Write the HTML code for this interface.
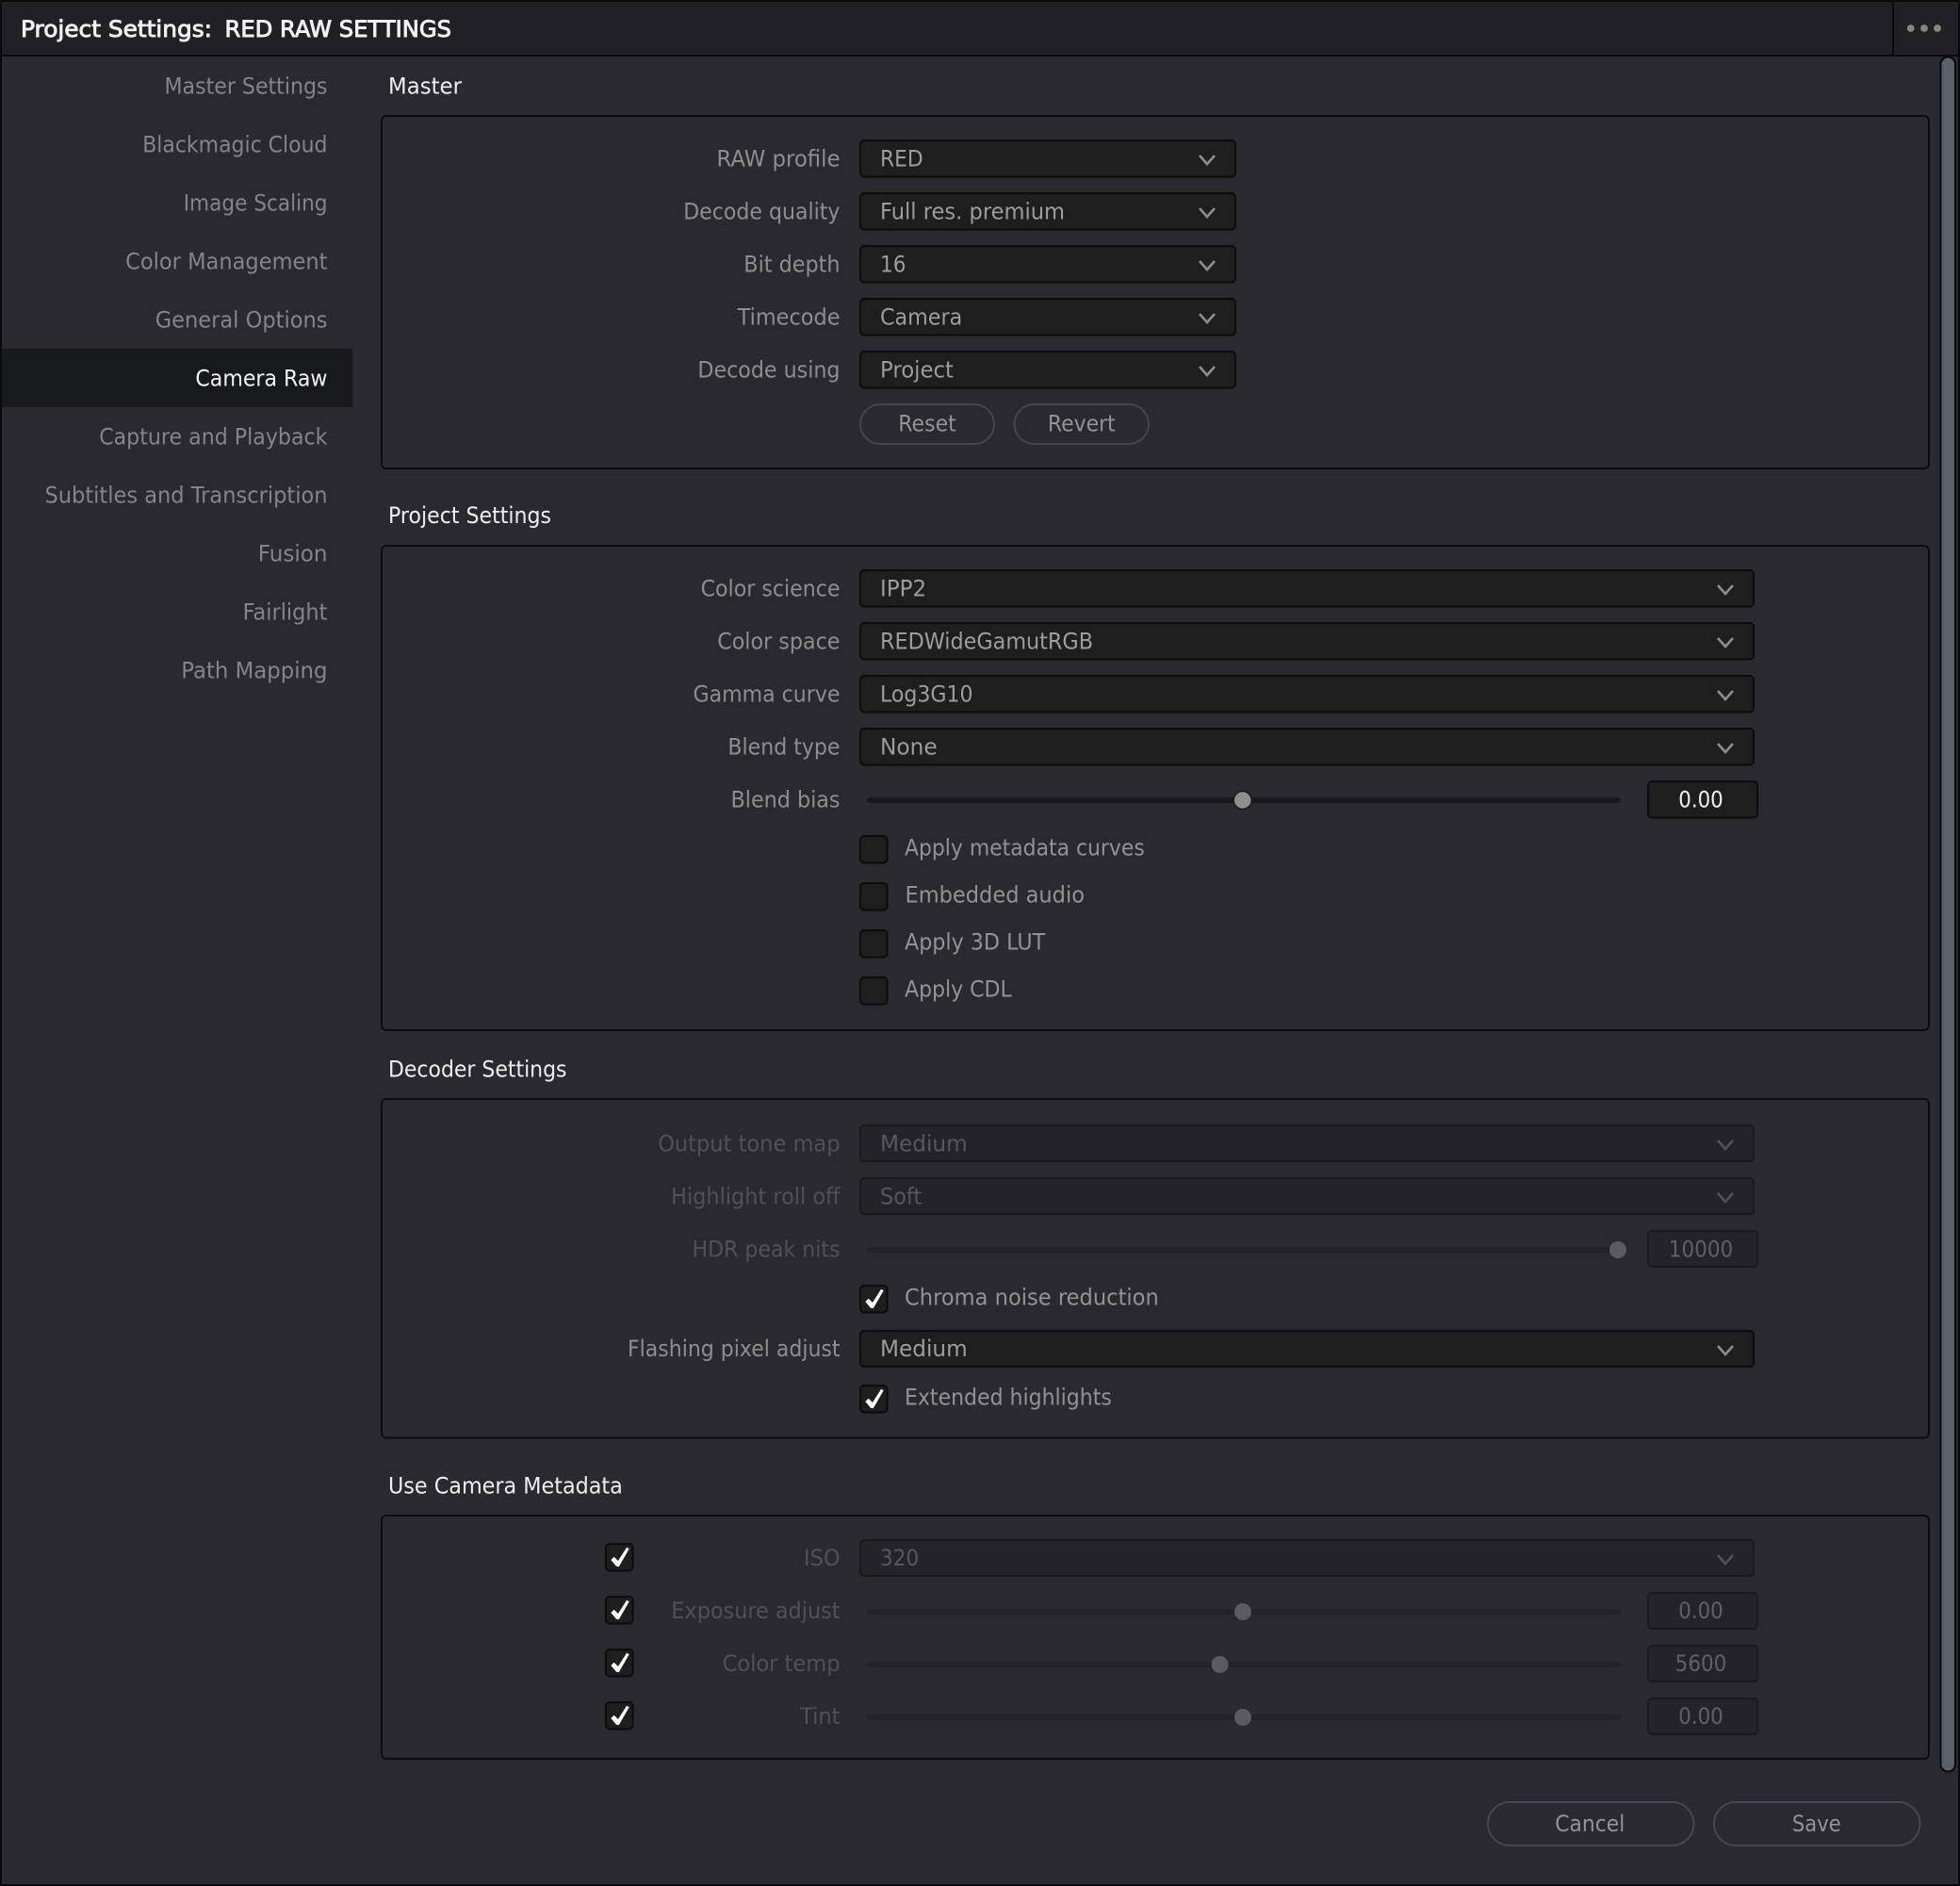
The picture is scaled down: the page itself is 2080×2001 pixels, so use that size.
<!DOCTYPE html>
<html lang="en">
<head>
<meta charset="utf-8">
<title>Project Settings</title>
<style>
html,body{margin:0;padding:0;background:#0a0a0c;}
svg{display:block;}
text{font-family:"DejaVu Sans","Liberation Sans",sans-serif;font-size:23.6px;transform:translateY(-.7px);}
.side{fill:#858587;text-anchor:end;}
.h{fill:#eeeeee;}
.l{fill:#8e8e8f;text-anchor:end;}
.ld{fill:#505157;text-anchor:end;}
.v{fill:#9d9d9d;}
.vd{fill:#56575c;}
.n{fill:#f0f0f0;text-anchor:middle;}
.nd{fill:#5f6065;text-anchor:middle;}
.cb{fill:#939394;}
.b{fill:#939394;text-anchor:middle;}
.dd{fill:#1e1e1f;stroke:#0c0c0e;stroke-width:2;}
.ddd{fill:#242428;stroke:#1a1a1d;stroke-width:2;}
.chev{fill:none;stroke:#8e8e8e;stroke-width:2.6;}
.chevd{fill:none;stroke:#505156;stroke-width:2.6;}
.panel{fill:#29292f;stroke:#0c0c0e;stroke-width:2;}
.btn{fill:none;stroke:#43464d;stroke-width:2;}
.chk{fill:#ffffff;}
</style>
</head>
<body>
<svg xmlns="http://www.w3.org/2000/svg" width="2080" height="2001" viewBox="0 0 2080 2001">
<rect x="0" y="0" width="2080" height="2001" fill="#0a0a0c"/>
<rect x="2" y="2" width="2076" height="1997" fill="#29292f"/>
<rect x="2" y="2" width="2076" height="56" fill="#212125"/>
<rect x="2" y="58" width="2076" height="2" fill="#0a0a0c"/>
<rect x="2008" y="2" width="2" height="56" fill="#0a0a0c"/>
<circle cx="2027.7" cy="30" r="3.9" fill="#858585"/>
<circle cx="2042" cy="30" r="3.9" fill="#858585"/>
<circle cx="2056" cy="30" r="3.9" fill="#858585"/>

<text x="22" y="39.5" fill="#f2f2f2" stroke="#f2f2f2" stroke-width=".9" textLength="203" lengthAdjust="spacingAndGlyphs">Project Settings:</text>
<text x="238.5" y="39.5" fill="#f2f2f2" stroke="#f2f2f2" stroke-width=".9" textLength="240.5" lengthAdjust="spacingAndGlyphs">RED RAW SETTINGS</text>

<!-- scrollbar -->
<rect x="2059.5" y="60.5" width="15.5" height="1819" rx="7.7" fill="#5a6068" stroke="#0a0a0c" stroke-width="2"/>

<!-- sidebar -->
<rect x="2" y="370" width="372" height="62" fill="#18191b"/>
<text class="side" x="347.5" y="100" textLength="173" lengthAdjust="spacingAndGlyphs">Master Settings</text>
<text class="side" x="347.5" y="162" textLength="196.3" lengthAdjust="spacingAndGlyphs">Blackmagic Cloud</text>
<text class="side" x="347.5" y="224" textLength="152.8" lengthAdjust="spacingAndGlyphs">Image Scaling</text>
<text class="side" x="347.5" y="286" textLength="214.4" lengthAdjust="spacingAndGlyphs">Color Management</text>
<text class="side" x="347.5" y="348" textLength="182.8" lengthAdjust="spacingAndGlyphs">General Options</text>
<text x="347.5" y="410" text-anchor="end" fill="#f2f2f2" textLength="140.1" lengthAdjust="spacingAndGlyphs">Camera Raw</text>
<text class="side" x="347.5" y="472" textLength="242.3" lengthAdjust="spacingAndGlyphs">Capture and Playback</text>
<text class="side" x="347.5" y="534" textLength="300" lengthAdjust="spacingAndGlyphs">Subtitles and Transcription</text>
<text class="side" x="347.5" y="596" textLength="73.7" lengthAdjust="spacingAndGlyphs">Fusion</text>
<text class="side" x="347.5" y="658" textLength="89.9" lengthAdjust="spacingAndGlyphs">Fairlight</text>
<text class="side" x="347.5" y="720" textLength="155.2" lengthAdjust="spacingAndGlyphs">Path Mapping</text>

<!-- headings -->
<text class="h" x="412" y="100" textLength="78" lengthAdjust="spacingAndGlyphs">Master</text>
<text class="h" x="412" y="555.5" textLength="173" lengthAdjust="spacingAndGlyphs">Project Settings</text>
<text class="h" x="412" y="1143" textLength="189.5" lengthAdjust="spacingAndGlyphs">Decoder Settings</text>
<text class="h" x="412" y="1585" textLength="248.8" lengthAdjust="spacingAndGlyphs">Use Camera Metadata</text>

<!-- panels -->
<rect class="panel" x="405" y="123" width="1642" height="374" rx="5"/>
<rect class="panel" x="405" y="579" width="1642" height="514" rx="5"/>
<rect class="panel" x="405" y="1166" width="1642" height="359.5" rx="5"/>
<rect class="panel" x="405" y="1608" width="1642" height="258" rx="5"/>

<!-- Master -->
<text class="l" x="891.5" y="177" textLength="131" lengthAdjust="spacingAndGlyphs">RAW profile</text>
<rect class="dd" x="913" y="149" width="398" height="38.5" rx="4"/>
<text class="v" x="934" y="177" textLength="45.6" lengthAdjust="spacingAndGlyphs">RED</text>
<polyline class="chev" points="1273,165 1281,174 1289,165"/>

<text class="l" x="891.5" y="233" textLength="166.3" lengthAdjust="spacingAndGlyphs">Decode quality</text>
<rect class="dd" x="913" y="205" width="398" height="38.5" rx="4"/>
<text class="v" x="934" y="233" textLength="196" lengthAdjust="spacingAndGlyphs">Full res. premium</text>
<polyline class="chev" points="1273,221 1281,230 1289,221"/>

<text class="l" x="891.5" y="289" textLength="102.2" lengthAdjust="spacingAndGlyphs">Bit depth</text>
<rect class="dd" x="913" y="261" width="398" height="38.5" rx="4"/>
<text class="v" x="934" y="289" textLength="27.4" lengthAdjust="spacingAndGlyphs">16</text>
<polyline class="chev" points="1273,277 1281,286 1289,277"/>

<text class="l" x="891.5" y="345" textLength="108.9" lengthAdjust="spacingAndGlyphs">Timecode</text>
<rect class="dd" x="913" y="317" width="398" height="38.5" rx="4"/>
<text class="v" x="934" y="345" textLength="87.2" lengthAdjust="spacingAndGlyphs">Camera</text>
<polyline class="chev" points="1273,333 1281,342 1289,333"/>

<text class="l" x="891.5" y="401" textLength="151.1" lengthAdjust="spacingAndGlyphs">Decode using</text>
<rect class="dd" x="913" y="373" width="398" height="38.5" rx="4"/>
<text class="v" x="934" y="401" textLength="78" lengthAdjust="spacingAndGlyphs">Project</text>
<polyline class="chev" points="1273,389 1281,398 1289,389"/>

<rect class="btn" x="913" y="429" width="142" height="42" rx="21"/>
<text class="b" x="984" y="458" textLength="61.5" lengthAdjust="spacingAndGlyphs">Reset</text>
<rect class="btn" x="1076.5" y="429" width="142.5" height="42" rx="21"/>
<text class="b" x="1147.8" y="458" textLength="71.8" lengthAdjust="spacingAndGlyphs">Revert</text>

<!-- Project Settings -->
<text class="l" x="891.5" y="633" textLength="147.9" lengthAdjust="spacingAndGlyphs">Color science</text>
<rect class="dd" x="913" y="605" width="948" height="38.5" rx="4"/>
<text class="v" x="934" y="633" textLength="49.2" lengthAdjust="spacingAndGlyphs">IPP2</text>
<polyline class="chev" points="1823,621 1831,630 1839,621"/>

<text class="l" x="891.5" y="689" textLength="130.3" lengthAdjust="spacingAndGlyphs">Color space</text>
<rect class="dd" x="913" y="661" width="948" height="38.5" rx="4"/>
<text class="v" x="934" y="689" textLength="226" lengthAdjust="spacingAndGlyphs">REDWideGamutRGB</text>
<polyline class="chev" points="1823,677 1831,686 1839,677"/>

<text class="l" x="891.5" y="745" textLength="156" lengthAdjust="spacingAndGlyphs">Gamma curve</text>
<rect class="dd" x="913" y="717" width="948" height="38.5" rx="4"/>
<text class="v" x="934" y="745" textLength="98.5" lengthAdjust="spacingAndGlyphs">Log3G10</text>
<polyline class="chev" points="1823,733 1831,742 1839,733"/>

<text class="l" x="891.5" y="801" textLength="119.1" lengthAdjust="spacingAndGlyphs">Blend type</text>
<rect class="dd" x="913" y="773" width="948" height="38.5" rx="4"/>
<text class="v" x="934" y="801" textLength="60.7" lengthAdjust="spacingAndGlyphs">None</text>
<polyline class="chev" points="1823,789 1831,798 1839,789"/>

<text class="l" x="891.5" y="857" textLength="116" lengthAdjust="spacingAndGlyphs">Blend bias</text>
<rect x="920" y="846" width="800" height="6" rx="3" fill="#18191b"/>
<circle cx="1318.7" cy="849" r="9.5" fill="#8e8e8e" stroke="#18191b" stroke-width="1.5"/>
<rect class="dd" x="1749" y="829" width="116" height="38.5" rx="4"/>
<text class="n" x="1805" y="857" textLength="47.5" lengthAdjust="spacingAndGlyphs">0.00</text>

<rect class="dd" x="913" y="887" width="28.5" height="28.5" rx="4"/>
<text class="cb" x="960" y="908" textLength="254.8" lengthAdjust="spacingAndGlyphs">Apply metadata curves</text>
<rect class="dd" x="913" y="937" width="28.5" height="28.5" rx="4"/>
<text class="cb" x="960.5" y="958" textLength="190.5" lengthAdjust="spacingAndGlyphs">Embedded audio</text>
<rect class="dd" x="913" y="987" width="28.5" height="28.5" rx="4"/>
<text class="cb" x="960" y="1008" textLength="149.2" lengthAdjust="spacingAndGlyphs">Apply 3D LUT</text>
<rect class="dd" x="913" y="1037" width="28.5" height="28.5" rx="4"/>
<text class="cb" x="960" y="1058" textLength="113.8" lengthAdjust="spacingAndGlyphs">Apply CDL</text>

<!-- Decoder Settings -->
<text class="ld" x="891.5" y="1222" textLength="193.3" lengthAdjust="spacingAndGlyphs">Output tone map</text>
<rect class="ddd" x="913" y="1194" width="948" height="38" rx="4"/>
<text class="vd" x="934" y="1222" textLength="92.7" lengthAdjust="spacingAndGlyphs">Medium</text>
<polyline class="chevd" points="1823,1210 1831,1219 1839,1210"/>

<text class="ld" x="891.5" y="1278" textLength="179.4" lengthAdjust="spacingAndGlyphs">Highlight roll off</text>
<rect class="ddd" x="913" y="1250" width="948" height="38" rx="4"/>
<text class="vd" x="934" y="1278" textLength="44.2" lengthAdjust="spacingAndGlyphs">Soft</text>
<polyline class="chevd" points="1823,1266 1831,1275 1839,1266"/>

<text class="ld" x="891.5" y="1334" textLength="157" lengthAdjust="spacingAndGlyphs">HDR peak nits</text>
<rect x="920" y="1323" width="800" height="6" rx="3" fill="#222327"/>
<circle cx="1717" cy="1326" r="9" fill="#5a5b62"/>
<rect class="ddd" x="1749" y="1306" width="116" height="38" rx="4"/>
<text class="nd" x="1805" y="1334" textLength="68.4" lengthAdjust="spacingAndGlyphs">10000</text>

<rect class="dd" x="913" y="1364" width="28.5" height="28.5" rx="4"/>
<polygon class="chk" points="918.3,1381 921.7,1377.7 926,1382 935,1367.7 937.7,1369.3 926.7,1388.3 924,1387.7"/>
<text class="cb" x="960" y="1385" textLength="269.8" lengthAdjust="spacingAndGlyphs">Chroma noise reduction</text>

<text class="l" x="891.5" y="1439.5" textLength="225.5" lengthAdjust="spacingAndGlyphs">Flashing pixel adjust</text>
<rect class="dd" x="913" y="1412" width="948" height="38" rx="4"/>
<text class="v" x="934" y="1439.5" textLength="92.7" lengthAdjust="spacingAndGlyphs">Medium</text>
<polyline class="chev" points="1823,1428 1831,1437 1839,1428"/>

<rect class="dd" x="913" y="1470" width="28.5" height="28.5" rx="4"/>
<polygon class="chk" points="918.3,1487 921.7,1483.7 926,1488 935,1473.7 937.7,1475.3 926.7,1494.3 924,1493.7"/>
<text class="cb" x="960" y="1491" textLength="219.8" lengthAdjust="spacingAndGlyphs">Extended highlights</text>

<!-- Use Camera Metadata -->
<rect class="dd" x="643" y="1638" width="28.5" height="28.5" rx="4"/>
<polygon class="chk" points="648.3,1655 651.7,1651.7 656,1656 665,1641.7 667.7,1643.3 656.7,1662.3 654,1661.7"/>
<rect class="dd" x="643" y="1694" width="28.5" height="28.5" rx="4"/>
<polygon class="chk" points="648.3,1711 651.7,1707.7 656,1712 665,1697.7 667.7,1699.3 656.7,1718.3 654,1717.7"/>
<rect class="dd" x="643" y="1750" width="28.5" height="28.5" rx="4"/>
<polygon class="chk" points="648.3,1767 651.7,1763.7 656,1768 665,1753.7 667.7,1755.3 656.7,1774.3 654,1773.7"/>
<rect class="dd" x="643" y="1806" width="28.5" height="28.5" rx="4"/>
<polygon class="chk" points="648.3,1823 651.7,1819.7 656,1824 665,1809.7 667.7,1811.3 656.7,1830.3 654,1829.7"/>

<text class="ld" x="891.5" y="1661.5" textLength="38.5" lengthAdjust="spacingAndGlyphs">ISO</text>
<rect class="ddd" x="913" y="1634" width="948" height="38" rx="4"/>
<text class="vd" x="934" y="1661.5" textLength="41.1" lengthAdjust="spacingAndGlyphs">320</text>
<polyline class="chevd" points="1823,1650 1831,1659 1839,1650"/>

<text class="ld" x="891.5" y="1717.5" textLength="179.1" lengthAdjust="spacingAndGlyphs">Exposure adjust</text>
<rect x="920" y="1707" width="800" height="6" rx="3" fill="#222327"/>
<circle cx="1318.9" cy="1710" r="9" fill="#5a5b62"/>
<rect class="ddd" x="1749" y="1690" width="116" height="38" rx="4"/>
<text class="nd" x="1805" y="1717.5" textLength="47.5" lengthAdjust="spacingAndGlyphs">0.00</text>

<text class="ld" x="891.5" y="1773.5" textLength="124.9" lengthAdjust="spacingAndGlyphs">Color temp</text>
<rect x="920" y="1763" width="800" height="6" rx="3" fill="#222327"/>
<circle cx="1294.6" cy="1766" r="9" fill="#5a5b62"/>
<rect class="ddd" x="1749" y="1746" width="116" height="38" rx="4"/>
<text class="nd" x="1805" y="1773.5" textLength="54.7" lengthAdjust="spacingAndGlyphs">5600</text>

<text class="ld" x="891.5" y="1829.5" textLength="42.4" lengthAdjust="spacingAndGlyphs">Tint</text>
<rect x="920" y="1819" width="800" height="6" rx="3" fill="#222327"/>
<circle cx="1318.9" cy="1822" r="9" fill="#5a5b62"/>
<rect class="ddd" x="1749" y="1802" width="116" height="38" rx="4"/>
<text class="nd" x="1805" y="1829.5" textLength="47.5" lengthAdjust="spacingAndGlyphs">0.00</text>

<!-- footer buttons -->
<rect class="btn" x="1579" y="1912" width="218.5" height="46" rx="23"/>
<text class="b" x="1687.3" y="1943.5" textLength="74" lengthAdjust="spacingAndGlyphs">Cancel</text>
<rect class="btn" x="1819" y="1912" width="218.5" height="46" rx="23"/>
<text class="b" x="1927.8" y="1943.5" textLength="51.8" lengthAdjust="spacingAndGlyphs">Save</text>
</svg>
</body>
</html>
